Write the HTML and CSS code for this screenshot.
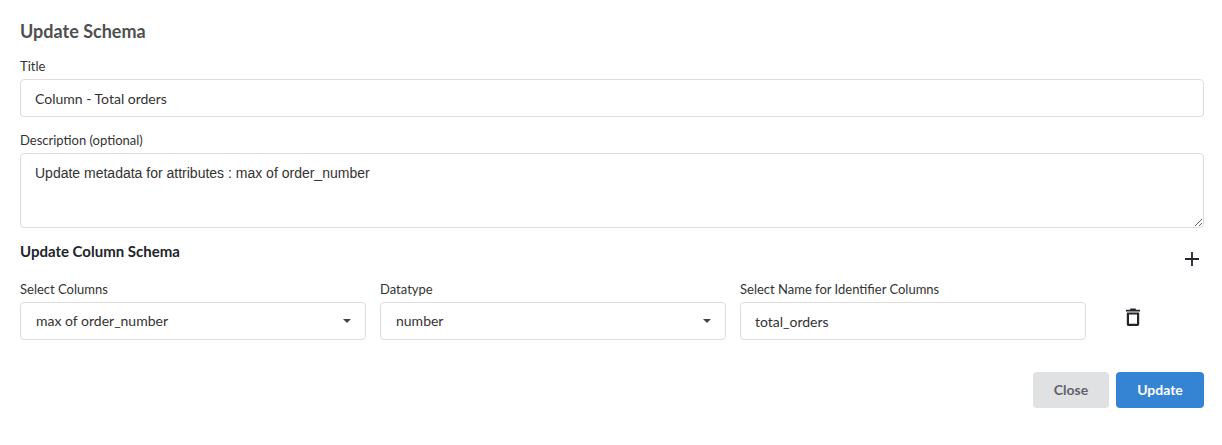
FILE: index.html
```html
<!DOCTYPE html>
<html lang="en">
<head>
<meta charset="utf-8">
<title>Update Schema</title>
<link rel="stylesheet" href="styles.css">
</head>
<body>
<form class="panel">
  <h1 class="heading">Update Schema</h1>
  <div class="field title-field">
    <label class="label">Title</label>
    <input class="control" type="text" value="Column - Total orders">
  </div>
  <div class="field desc-field">
    <label class="label">Description (optional)</label>
    <textarea class="control area">Update metadata for attributes : max of order_number</textarea>
  </div>
  <div class="sub-row">
    <h2 class="subheading">Update Column Schema</h2>
    <button type="button" class="icon-btn plus" aria-label="Add">
      <svg width="14" height="14" viewBox="0 0 14 14"><path d="M7 0v14M0 7h14" stroke="#212529" stroke-width="1.8" fill="none"/></svg>
    </button>
  </div>
  <div class="columns">
    <div class="col">
      <label class="label">Select Columns</label>
      <div class="select"><span>max of order_number</span><i class="caret"></i></div>
    </div>
    <div class="col">
      <label class="label">Datatype</label>
      <div class="select"><span>number</span><i class="caret"></i></div>
    </div>
    <div class="col">
      <label class="label">Select Name for Identifier Columns</label>
      <input class="control" type="text" value="total_orders">
    </div>
    <button type="button" class="icon-btn trash" aria-label="Delete">
      <svg width="14" height="18" viewBox="0 0 14 18"><path d="M1.9 5.5h10.2v10.7a.6.6 0 0 1-.6.6H2.5a.6.6 0 0 1-.6-.6z" stroke="#212529" stroke-width="2.2" fill="none"/><path d="M0 1.7h14v1.7H0z M4.2 .4h5.6v1.6H4.2z" fill="#212529"/></svg>
    </button>
  </div>
  <div class="actions">
    <button type="button" class="btn close">Close</button>
    <button type="button" class="btn update">Update</button>
  </div>
</form>
</body>
</html>
```

FILE: styles.css
```css
* { box-sizing: border-box; }
html, body { margin: 0; background: #fff; }
body { font-family: Lato, sans-serif; color: #212529; text-rendering: optimizeLegibility; }
.panel { width: 1222px; height: 445px; padding: 20px 18px 0 20px; }
.heading { margin: 0; font-size: 18px; line-height: 22px; font-weight: 700; color: #4f4f4f; }
.field { display: flex; flex-direction: column; }
.title-field { margin-top: 16px; }
.desc-field { margin-top: 15px; }
.label { display: block; font-size: 13px; line-height: 16px; color: #333; margin-bottom: 5px; }
.control {
  display: block; width: 100%; height: 38px; padding: 0 14px;
  border: 1px solid #ddd; border-radius: 4px; background: #fff;
  font-family: Lato, sans-serif; font-size: 14px; color: #333; outline: none;
  text-rendering: optimizeLegibility;
}
.area { height: 75px; padding: 11px 14px; font-family: "Liberation Sans", Arial, sans-serif; line-height: 17px; resize: vertical; }
.sub-row { display: flex; justify-content: space-between; margin-top: 14px; height: 32px; }
.subheading { margin: 0; font-size: 15px; line-height: 18px; font-weight: 700; color: #212529; }
.icon-btn { border: 0; padding: 0; background: none; display: block; line-height: 0; }
.plus { margin: 10px 5px 0 0; height: 14px; }
.columns { display: flex; gap: 14px; margin-top: 7px; }
.col { width: 346px; }
.select {
  display: flex; align-items: center; justify-content: space-between;
  height: 38px; padding: 0 14px 2px 15px;
  border: 1px solid #ddd; border-radius: 4px; background: #fff;
  font-size: 14px; color: #333;
}
.caret { width: 0; height: 0; margin-top: 2px; border-left: 4px solid transparent; border-right: 4px solid transparent; border-top: 4px solid #444; }
.trash { margin: 27px 0 0 26px; height: 18px; }
.actions { display: flex; justify-content: flex-end; gap: 7px; margin-top: 32px; }
.btn { height: 36px; padding: 0 0 2px; border: 0; border-radius: 4px; font-family: Lato, sans-serif; font-size: 14px; font-weight: 700; text-rendering: optimizeLegibility; }
.close { width: 76px; background: #e0e1e3; color: #5f6368; }
.update { width: 88px; background: #3584d4; color: #fff; }
```
